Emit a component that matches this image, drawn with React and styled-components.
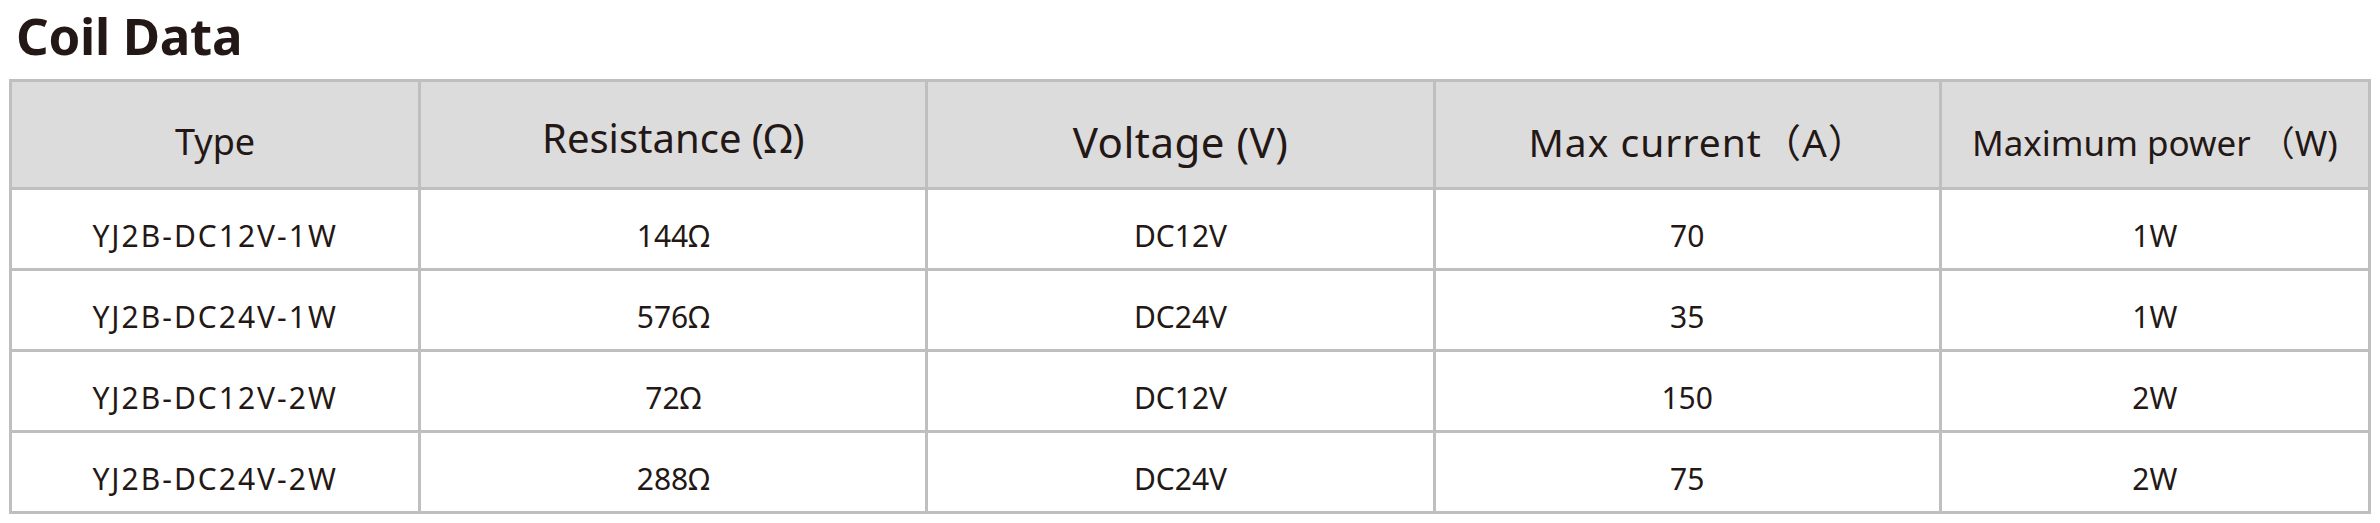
import React from 'react';
import styled, { createGlobalStyle } from 'styled-components';

const GlobalStyle = createGlobalStyle`
  html, body {
    margin: 0;
    padding: 0;
    background: #ffffff;
  }
  body {
    font-family: "Noto Sans", "Noto Sans CJK SC", sans-serif;
    color: #231815;
  }
`;

const Page = styled.div`
  width: 2380px;
  height: 523px;
  padding: 0 0 0 9px;
  box-sizing: border-box;
  overflow: hidden;
`;

const Title = styled.h2`
  margin: 0;
  padding: 0 0 0 7px;
  height: 79px;
  font-size: 51px;
  font-weight: 700;
  line-height: 70px;
  letter-spacing: -0.3px;
  color: #231815;
`;

const Table = styled.table`
  width: 2362px;
  table-layout: fixed;
  border-collapse: collapse;
  border: 3px solid #bfbfbf;
`;

const HeadCell = styled.th`
  height: 108px;
  padding: ${(p) => p.$top || 0}px 0 0 ${(p) => p.$left || 0}px;
  box-sizing: border-box;
  background: #dcdcdc;
  border: 3px solid #bfbfbf;
  font-size: ${(p) => p.$size}px;
  font-weight: 400;
  line-height: 1;
  text-align: center;
  vertical-align: middle;
  color: #231815;
  letter-spacing: ${(p) => p.$spacing || 0}px;
  white-space: pre;
`;

const Row = styled.tr`
  height: 81px;
`;

const Cell = styled.td`
  padding: 13px 0 0;
  border: 3px solid #bfbfbf;
  font-size: 30px;
  line-height: 1;
  text-align: center;
  vertical-align: middle;
  color: #231815;
  letter-spacing: ${(p) => (p.$wide ? '2px' : '0')};
  white-space: nowrap;
`;

const columns = [
  { label: 'Type', width: 409, size: 36, top: 14 },
  { label: 'Resistance (Ω)', width: 507, size: 40, top: 6 },
  { label: 'Voltage (V)', width: 507, size: 42, top: 14, spacing: 0.5 },
  { label: 'Max current（A）', width: 506, size: 39, top: 14, spacing: 1, left: 22 },
  { label: 'Maximum power （W)', width: 429, size: 35, top: 16 },
];

const rows = [
  ['YJ2B-DC12V-1W', '144Ω', 'DC12V', '70', '1W'],
  ['YJ2B-DC24V-1W', '576Ω', 'DC24V', '35', '1W'],
  ['YJ2B-DC12V-2W', '72Ω', 'DC12V', '150', '2W'],
  ['YJ2B-DC24V-2W', '288Ω', 'DC24V', '75', '2W'],
];

const App = () => {
  return (
    <Page>
      <GlobalStyle />
      <Title>Coil Data</Title>
      <Table>
        <colgroup>
          {columns.map((c) => (
            <col key={c.label} style={{ width: c.width }} />
          ))}
        </colgroup>
        <thead>
          <tr>
            {columns.map((c) => (
              <HeadCell
                key={c.label}
                $size={c.size}
                $top={c.top}
                $left={c.left}
                $spacing={c.spacing}
              >
                {c.label}
              </HeadCell>
            ))}
          </tr>
        </thead>
        <tbody>
          {rows.map((r) => (
            <Row key={r[0]}>
              {r.map((v, i) => (
                <Cell key={i} $wide={i === 0}>
                  {v}
                </Cell>
              ))}
            </Row>
          ))}
        </tbody>
      </Table>
    </Page>
  );
};

export default App;
